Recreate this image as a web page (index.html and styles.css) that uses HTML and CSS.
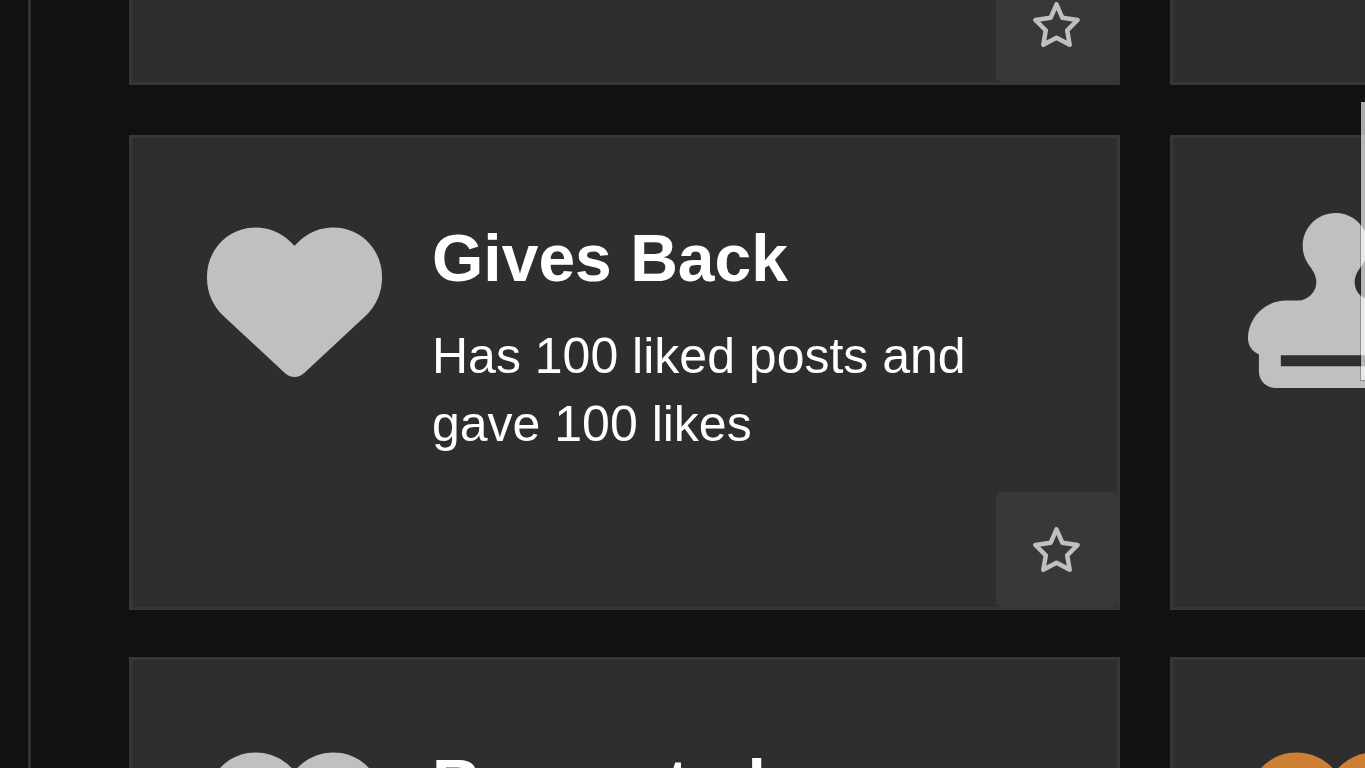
FILE: index.html
```html
<!DOCTYPE html>
<html lang="en">
<head>
<meta charset="utf-8">
<title>Badges</title>
<link rel="stylesheet" href="styles.css">
</head>
<body>
<svg class="symbols" aria-hidden="true">
  <symbol id="heart" viewBox="0 0 512 512"><path d="M47.6 300.4L228.3 469.1c7.5 7 17.4 10.9 27.7 10.9s20.2-3.9 27.7-10.9L464.4 300.4c30.4-28.3 47.6-68 47.6-109.5v-5.8c0-69.9-50.5-129.5-119.4-141C347 36.5 300.6 51.4 268 84L256 96 244 84c-32.6-32.6-79-47.5-124.6-39.9C50.5 55.6 0 115.2 0 185.1v5.8c0 41.5 17.2 81.2 47.6 109.5z"/></symbol>
  <symbol id="stamp" viewBox="0 0 512 512"><path d="M312 201.8c0-17.4 9.2-33.2 19.9-47C344.5 138.5 352 118.1 352 96c0-53-43-96-96-96s-96 43-96 96c0 22.1 7.5 42.5 20.1 58.8c10.7 13.8 19.9 29.6 19.9 47c0 29.9-24.3 54.2-54.2 54.2H112C50.1 256 0 306.1 0 368c0 20.9 13.4 38.7 32 45.3V464c0 26.5 21.5 48 48 48H432c26.5 0 48-21.5 48-48V413.3c18.6-6.6 32-24.4 32-45.3c0-61.9-50.1-112-112-112H366.2c-29.9 0-54.2-24.3-54.2-54.2zM416 416v32H96V416H416z"/></symbol>
  <symbol id="star" viewBox="0 0 50 46"><path d="M24.5 2.4L30.4 15.8 45.6 18 35.2 28.4 37.7 42.8 24.5 35.7 11.3 42.8 13.8 28.4 3.4 18 18.6 15.8z" fill="none" stroke="currentColor" stroke-width="4.5" stroke-linejoin="round"/></symbol>
</svg>
<main class="content">
  <div class="badges">
    <article class="card"><button class="favorite" aria-label="Favorite badge"><svg class="star"><use href="#star"/></svg></button></article>
    <article class="card"></article>
    <article class="card">
      <svg class="icon"><use href="#heart"/></svg>
      <div class="info">
        <h3 class="name">Gives Back</h3>
        <p class="summary">Has 100 liked posts and gave 100 likes</p>
      </div>
      <button class="favorite" aria-label="Favorite Gives Back"><svg class="star"><use href="#star"/></svg></button>
    </article>
    <article class="card">
      <svg class="icon"><use href="#stamp"/></svg>
    </article>
    <article class="card card-tall">
      <svg class="icon"><use href="#heart"/></svg>
      <div class="info"><h3 class="name">Respected</h3></div>
    </article>
    <article class="card card-tall">
      <svg class="icon icon-bronze"><use href="#heart"/></svg>
    </article>
  </div>
</main>
<div class="overlay"></div>
</body>
</html>
```
FILE: styles.css
```css
* {
  box-sizing: border-box;
}

body {
  margin: 0;
  height: 100vh;
  overflow: hidden;
  position: relative;
  background: #111;
  color: #fff;
  font-family: "Liberation Sans", Arial, sans-serif;
}

.symbols {
  display: none;
}

.content {
  height: 100%;
  margin-left: 28px;
  padding-left: 98px;
  border-left: 3px solid #333;
  overflow: hidden;
}

/* The list is scrolled part of the way down its first row. */
.badges {
  display: grid;
  grid-template-columns: repeat(2, minmax(991px, 1fr));
  grid-auto-rows: minmax(475px, auto);
  gap: 50px;
  margin-top: -390px;
}

.card {
  position: relative;
  display: flex;
  align-items: flex-start;
  gap: 50px;
  padding: 75px;
  border: 3px solid #373737;
  background: #2e2e2e;
}

.card-tall {
  margin-top: -3px;
  padding-top: 78px;
}

.icon {
  flex: none;
  width: 175px;
  height: 175px;
  fill: #c0c0c0;
}

.icon-bronze {
  fill: #cd7f32;
}

.info {
  flex: 1;
}

.name {
  margin: 0 0 19px;
  font-size: 66px;
  line-height: 90px;
}

.summary {
  margin: 0;
  font-size: 50px;
  line-height: 68px;
}

.favorite {
  position: absolute;
  right: 0;
  bottom: 0;
  display: flex;
  align-items: center;
  justify-content: center;
  width: 121px;
  height: 115px;
  padding: 0;
  border: 0;
  border-radius: 5px;
  background: #383838;
  color: #c0c0c0;
}

.star {
  width: 50px;
  height: 46px;
}

.overlay {
  position: absolute;
  top: 102px;
  right: 0;
  width: 5px;
  height: 279px;
  border: solid rgba(0, 0, 0, 0.25);
  border-width: 0 0 1px 1px;
  background: rgba(255, 255, 255, 0.65);
  background-clip: padding-box;
}
```
